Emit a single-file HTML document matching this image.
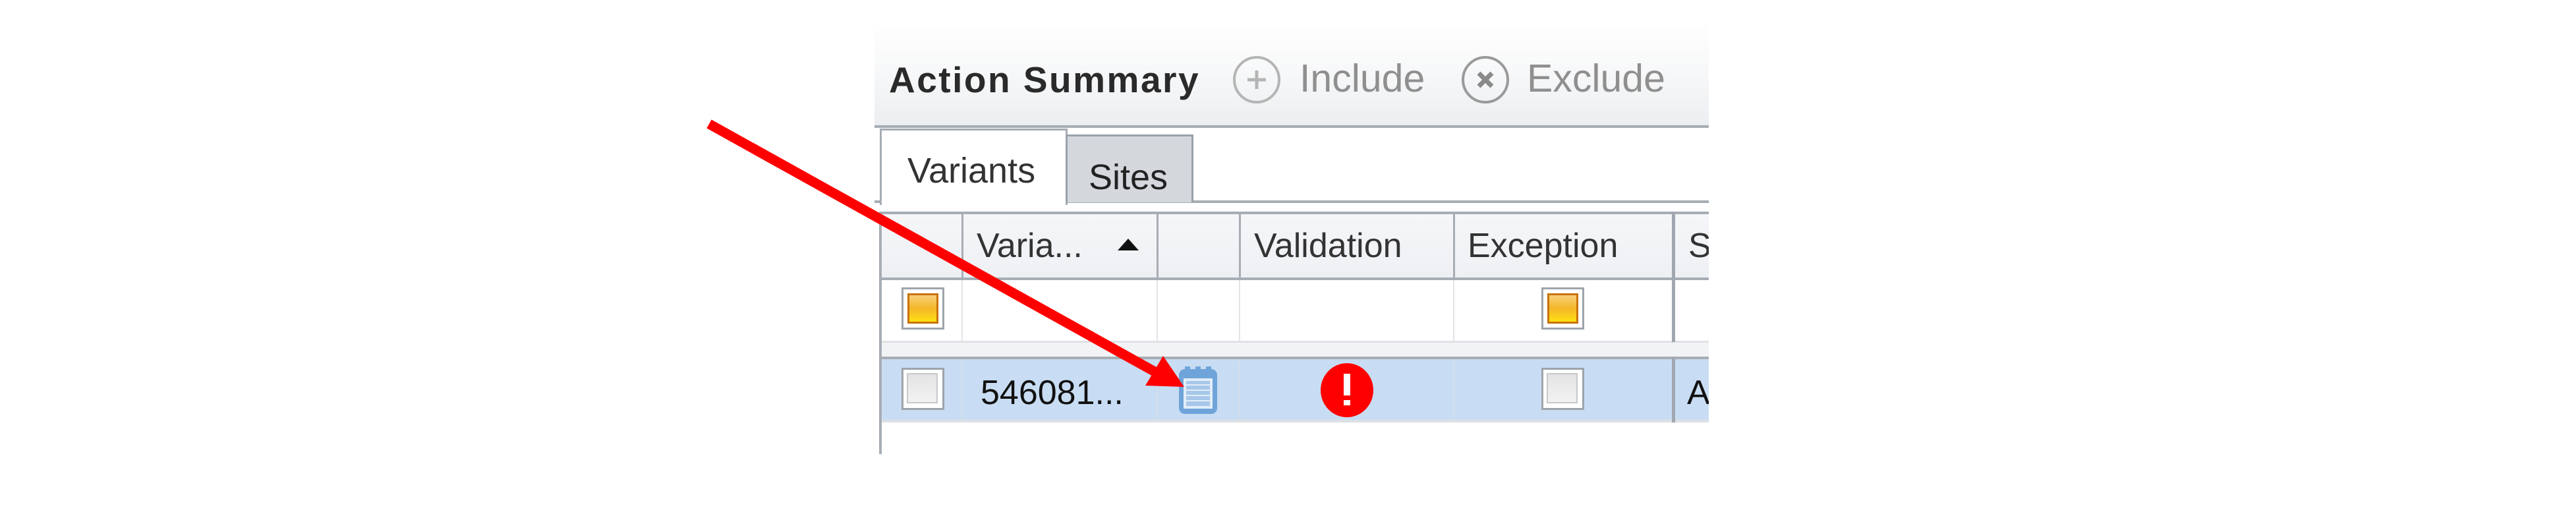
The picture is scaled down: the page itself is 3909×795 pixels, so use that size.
<!DOCTYPE html>
<html><head><meta charset="utf-8"><style>
html,body{margin:0;padding:0;width:3909px;height:795px;background:#fff;overflow:hidden;position:relative;font-family:"Liberation Sans",sans-serif}
.a{position:absolute}
.t{position:absolute;white-space:nowrap;line-height:1}
</style></head><body>
<!-- toolbar -->
<div class="a" style="left:1327px;top:40px;width:1266px;height:152px;background:linear-gradient(#fefefe,#f7f8f9 45%,#eceef1)"></div>
<div class="a" style="left:1327px;top:190px;width:1266px;height:4px;background:#a7adb5"></div>
<div class="t" style="left:1349px;top:94px;font-size:55px;font-weight:bold;color:#2a2a2a;letter-spacing:2.5px">Action Summary</div>
<svg class="a" style="left:1869px;top:83px" width="76" height="76"><circle cx="38" cy="38" r="34" fill="none" stroke="#b5b5b5" stroke-width="4"/><path d="M38 24v28M24 38h28" stroke="#b5b5b5" stroke-width="5"/></svg>
<div class="t" style="left:1972px;top:90px;font-size:59px;color:#8f8f8f">Include</div>
<svg class="a" style="left:2217px;top:83px" width="76" height="76"><circle cx="37" cy="38" r="34" fill="none" stroke="#9a9a9a" stroke-width="4"/><path d="M27 28l20 20M47 28l-20 20" stroke="#8a8a8a" stroke-width="7"/></svg>
<div class="t" style="left:2317px;top:90px;font-size:59px;color:#8f8f8f">Exclude</div>
<!-- tabs -->
<div class="a" style="left:1327px;top:304px;width:1266px;height:4px;background:#a7adb5"></div>
<div class="a" style="left:1335px;top:195px;width:279px;height:113px;background:#fff;border:3px solid #a7adb5;border-bottom:none"></div>
<div class="t" style="left:1377px;top:232px;font-size:54px;color:#333">Variants</div>
<div class="a" style="left:1617px;top:204px;width:188px;height:100px;background:#d4d8dd;border:3px solid #9aa2ab;border-bottom:none"></div>
<div class="t" style="left:1652px;top:242px;font-size:54px;color:#222">Sites</div>
<!-- grid -->
<div class="a" style="left:1335px;top:321px;width:1258px;height:4px;background:#a7adb5"></div>
<div class="a" style="left:1335px;top:325px;width:1258px;height:97px;background:linear-gradient(#f5f6f8,#eef0f4)"></div>
<div class="a" style="left:1335px;top:421px;width:1258px;height:4px;background:#a7adb5"></div>
<div class="a" style="left:1335px;top:517px;width:1258px;height:25px;background:#f2f3f5;border-top:3px solid #e0e2e6"></div>
<div class="a" style="left:1335px;top:541px;width:1258px;height:4px;background:#a7adb5"></div>
<div class="a" style="left:1335px;top:545px;width:1258px;height:92px;background:#c8ddf3"></div>
<div class="a" style="left:1335px;top:637px;width:1258px;height:4px;background:#dde0e4"></div>
<!-- column borders -->
<div class="a" style="left:1334px;top:321px;width:4px;height:368px;background:#a7adb5"></div>
<div class="a" style="left:1459px;top:325px;width:3px;height:97px;background:#a7adb5"></div>
<div class="a" style="left:1755px;top:325px;width:3px;height:97px;background:#a7adb5"></div>
<div class="a" style="left:1880px;top:325px;width:3px;height:97px;background:#a7adb5"></div>
<div class="a" style="left:2205px;top:325px;width:3px;height:97px;background:#a7adb5"></div>
<div class="a" style="left:1459px;top:425px;width:2px;height:92px;background:#e2e4e8"></div>
<div class="a" style="left:1755px;top:425px;width:2px;height:92px;background:#e2e4e8"></div>
<div class="a" style="left:1880px;top:425px;width:2px;height:92px;background:#e2e4e8"></div>
<div class="a" style="left:2205px;top:425px;width:2px;height:92px;background:#e2e4e8"></div>
<div class="a" style="left:1459px;top:545px;width:2px;height:92px;background:#d5dde8"></div>
<div class="a" style="left:1755px;top:545px;width:2px;height:92px;background:#d5dde8"></div>
<div class="a" style="left:1880px;top:545px;width:2px;height:92px;background:#d5dde8"></div>
<div class="a" style="left:2205px;top:545px;width:2px;height:92px;background:#d5dde8"></div>
<div class="a" style="left:2537px;top:321px;width:5px;height:198px;background:#a0a7b0"></div>
<div class="a" style="left:2537px;top:541px;width:5px;height:100px;background:#a0a7b0"></div>
<!-- header text -->
<div class="t" style="left:1482px;top:347px;font-size:52px;color:#333">Varia...</div>
<svg class="a" style="left:1695px;top:361px" width="34" height="20"><path d="M17 1L33 19H1Z" fill="#111"/></svg>
<div class="t" style="left:1903px;top:347px;font-size:52px;color:#333">Validation</div>
<div class="t" style="left:2227px;top:347px;font-size:52px;color:#333">Exception</div>
<div class="t" style="left:2562px;top:347px;font-size:52px;color:#333;width:31px;overflow:hidden">S</div>
<!-- filter checkboxes -->
<div class="a" style="left:1368px;top:436px;width:59px;height:58px;border:3px solid #9ea4ab;background:#fff"></div>
<div class="a" style="left:1377px;top:445px;width:41px;height:40px;border:3px solid #c8730a;background:linear-gradient(#f8cf7a,#f4b72a 50%,#fde012)"></div>
<div class="a" style="left:2339px;top:436px;width:59px;height:58px;border:3px solid #9ea4ab;background:#fff"></div>
<div class="a" style="left:2348px;top:445px;width:41px;height:40px;border:3px solid #c8730a;background:linear-gradient(#f8cf7a,#f4b72a 50%,#fde012)"></div>
<!-- data row -->
<div class="a" style="left:1368px;top:558px;width:59px;height:58px;border:3px solid #9ea4ab;background:#fff"></div>
<div class="a" style="left:1376px;top:566px;width:43px;height:42px;border:2px solid #c8c8c8;background:linear-gradient(#e4e4e4,#f2f2f2)"></div>
<div class="t" style="left:1488px;top:570px;font-size:52px;color:#111">546081...</div>
<svg class="a" style="left:1786px;top:550px" width="64" height="82">
<rect x="3" y="10" width="58" height="68" rx="9" fill="#6ea4d9"/>
<rect x="12" y="6" width="8" height="12" fill="#6ea4d9"/><rect x="28" y="6" width="8" height="12" fill="#6ea4d9"/><rect x="44" y="6" width="8" height="12" fill="#6ea4d9"/>
<rect x="10" y="24" width="44" height="46" fill="#e2edf8"/>
<rect x="14" y="28" width="36" height="38" fill="#a7c7ea"/>
<path d="M14 34h36M14 42h36M14 50h36M14 58h36" stroke="#e2edf8" stroke-width="2"/>
</svg>
<svg class="a" style="left:2003px;top:550px" width="82" height="84"><ellipse cx="41" cy="42" rx="40" ry="41" fill="#f00"/><rect x="36" y="17" width="10" height="33" fill="#fff"/><rect x="36" y="57" width="10" height="8" fill="#fff"/></svg>
<div class="a" style="left:2339px;top:558px;width:59px;height:58px;border:3px solid #9ea4ab;background:#fff"></div>
<div class="a" style="left:2347px;top:566px;width:43px;height:42px;border:2px solid #c8c8c8;background:linear-gradient(#e4e4e4,#f2f2f2)"></div>
<div class="t" style="left:2560px;top:570px;font-size:52px;color:#111;width:33px;overflow:hidden">A</div>
<!-- arrow -->
<svg class="a" style="left:0;top:0" width="3909" height="795">
<line x1="1076" y1="188" x2="1756" y2="566" stroke="#f00" stroke-width="15"/>
<polygon points="1765,540 1797,587 1738,585" fill="#f00"/>
</svg>
</body></html>
